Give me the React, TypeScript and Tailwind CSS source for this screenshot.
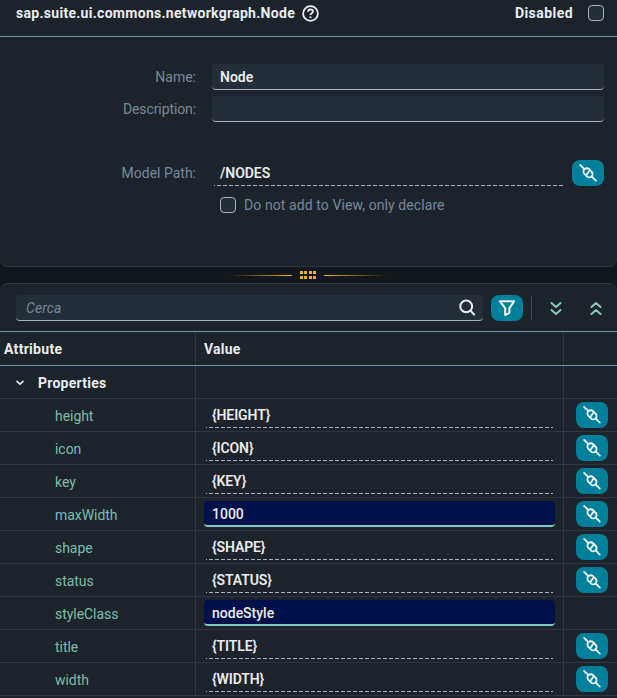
import type { ReactNode } from "react";

function LinkIcon() {
  return (
    <svg width="18" height="18" viewBox="0 0 18 18" fill="none" stroke="#eef6f8" strokeWidth="1.8" strokeLinecap="round">
      <path d="M1.2 1 5.4 5.2M12.6 12.4l4.2 4.2" />
      <rect x="3.9" y="5.5" width="10.2" height="6.6" rx="3.3" transform="rotate(45 9 8.8)" />
      <path d="M10.4 6.8 7.6 10.8" />
    </svg>
  );
}

function LinkButton() {
  return (
    <button className="flex h-[26px] w-8 shrink-0 items-center justify-center rounded-lg bg-[#00809b]">
      <LinkIcon />
    </button>
  );
}

function Box() {
  return <span className="block size-4 shrink-0 rounded-[4px] border border-[#a9b4be] bg-[#242e38]" />;
}

function Dashes() {
  return (
    <span className="block h-px bg-[repeating-linear-gradient(90deg,#a9b4be_0_1px,transparent_1px_3px,#a9b4be_3px_6px)]" />
  );
}

function Label({ children }: { children: ReactNode }) {
  return <span className="w-[196px] shrink-0 text-right text-[#748a9f]">{children}</span>;
}

const rows = [
  { name: "height", value: "{HEIGHT}", bound: true, link: true },
  { name: "icon", value: "{ICON}", bound: true, link: true },
  { name: "key", value: "{KEY}", bound: true, link: true },
  { name: "maxWidth", value: "1000", bound: false, link: true },
  { name: "shape", value: "{SHAPE}", bound: true, link: true },
  { name: "status", value: "{STATUS}", bound: true, link: true },
  { name: "styleClass", value: "nodeStyle", bound: false, link: false },
  { name: "title", value: "{TITLE}", bound: true, link: true },
  { name: "width", value: "{WIDTH}", bound: true, link: true },
];

export default function App() {
  return (
    <div className="flex h-[698px] w-[617px] flex-col overflow-hidden bg-[#12171b] font-['Roboto',sans-serif] text-[14px] leading-[18px] text-[#eaecee]">
      <section className="flex h-[267px] shrink-0 flex-col rounded-b-lg border-b border-[#2f3742] bg-[#1d232a]">
        <header className="flex h-[37px] items-center border-b border-[#7590a9] pr-[13px] pb-[10px] pl-4 font-bold">
          <span className="tracking-[0.29px]">sap.suite.ui.commons.networkgraph.Node</span>
          <svg className="ml-[7px]" width="17" height="17" viewBox="0 0 17 17" fill="none" stroke="#eaecee" strokeWidth="1.8">
            <circle cx="8.5" cy="8.5" r="7.4" />
            <path d="M6 6.8C6 5.4 7 4.5 8.5 4.5S11 5.4 11 6.6c0 1.6-2.5 1.7-2.5 3.3" />
            <path d="M8.5 11.4v1.7" />
          </svg>
          <span className="mr-[15px] ml-auto tracking-[0.45px]">Disabled</span>
          <Box />
        </header>
        <div className="flex flex-col pt-[27px] pr-[13px]">
          <div className="flex h-[26px] items-center">
            <Label>Name:</Label>
            <div className="ml-4 flex h-[26px] flex-1 items-center rounded-[4px] border-b border-[#a9b4be] bg-[#242e38] pt-px pl-2 font-semibold">Node</div>
          </div>
          <div className="mt-[6px] flex h-[26px] items-center">
            <Label><span className="tracking-[-0.1px]">Description:</span></Label>
            <div className="ml-4 h-[26px] flex-1 rounded-[4px] border-b border-[#a9b4be] bg-[#242e38]" />
          </div>
          <div className="mt-[38px] flex h-[26px] items-center">
            <Label>Model Path:</Label>
            <div className="mr-2 ml-[18px] flex h-[26px] flex-1 flex-col justify-between">
              <span className="pt-1 pl-[6px] font-semibold tracking-[-0.05px]">/NODES</span>
              <Dashes />
            </div>
            <LinkButton />
          </div>
          <div className="mt-[10px] flex h-[18px] items-center gap-2 pl-[220px] text-[#748a9f]">
            <Box />
            <span className="tracking-[0.09px]">Do not add to View, only declare</span>
          </div>
        </div>
      </section>

      <div className="flex h-4 shrink-0 items-center justify-center pr-px">
        <span className="h-px w-16 bg-linear-to-r from-transparent to-[#f5b223]" />
        <span className="mx-2 grid grid-cols-4 gap-x-[1.33px] gap-y-[2px]">
          {Array.from({ length: 8 }, (_, i) => (
            <i key={i} className="block size-[3px] bg-[#f5b223]" />
          ))}
        </span>
        <span className="h-px w-16 bg-linear-to-l from-transparent to-[#f5b223]" />
      </div>

      <section className="flex h-[415px] shrink-0 flex-col overflow-hidden rounded-t-lg border-t border-[#2f3742] bg-[#1d232a]">
        <div className="flex h-12 shrink-0 border-b border-[#7590a9] pt-[11px] pl-4">
          <div className="flex h-[26px] w-[467px] items-center justify-between rounded-[4px] border-b border-[#a9b4be] bg-[#242e38] pr-[7px] pl-[10px]">
            <span className="pt-px tracking-[0.1px] text-[#748a9f] italic">Cerca</span>
            <svg width="17" height="17" viewBox="0 0 17 17" fill="none" stroke="#eaecee" strokeWidth="2" strokeLinecap="round">
              <circle cx="7.2" cy="7.4" r="5.9" />
              <path d="m11.6 11.8 3.6 3.8" />
            </svg>
          </div>
          <button className="ml-2 flex h-[26px] w-8 items-center justify-center rounded-lg bg-[#00809b]">
            <svg width="18" height="18" viewBox="0 0 18 18" fill="none" stroke="#f1f7f8" strokeWidth="2" strokeLinejoin="round">
              <path d="M1.8 2.2h14.4l-4.8 6.9v4.7L7.2 16V9.1Z" />
            </svg>
          </button>
          <span className="mt-px ml-2 h-6 w-px bg-[#3c4753]" />
          <svg className="mt-[6px] ml-[17px]" width="14" height="16" viewBox="0 0 14 16" fill="none" stroke="#83ccbb" strokeWidth="2" strokeLinecap="round" strokeLinejoin="round">
            <path d="m2.5 2 4.5 4 4.5-4M2.5 9 7 13l4.5-4" />
          </svg>
          <svg className="mt-[6px] ml-[26px]" width="14" height="16" viewBox="0 0 14 16" fill="none" stroke="#83ccbb" strokeWidth="2" strokeLinecap="round" strokeLinejoin="round">
            <path d="m2.5 6 4.5-4 4.5 4M2.5 13 7 9l4.5 4" />
          </svg>
        </div>
        <div className="grid h-[34px] shrink-0 grid-cols-[196px_368px_53px] border-b border-[#7590a9] font-bold">
          <span className="border-r border-[#2f3742] pt-2 pl-1 tracking-[0.3px]">Attribute</span>
          <span className="border-r border-[#2f3742] pt-2 pl-2 tracking-[0.25px]">Value</span>
        </div>
        <div className="grid h-[33px] shrink-0 grid-cols-[196px_368px_53px] border-b border-[#2f3742] font-bold">
          <span className="flex items-center border-r border-[#2f3742] pt-[2px] pl-[15px]">
            <svg width="10" height="8" viewBox="0 0 10 8" fill="none" stroke="#eaecee" strokeWidth="1.6" strokeLinecap="round" strokeLinejoin="round">
              <path d="m2 2.3 3 2.8 3-2.8" />
            </svg>
            <span className="ml-[13px] tracking-[0.25px]">Properties</span>
          </span>
          <span className="border-r border-[#2f3742]" />
        </div>
        {rows.map((r) => (
          <div key={r.name} className="grid h-[33px] shrink-0 grid-cols-[196px_368px_53px] border-b border-[#2f3742]">
            <span className="border-r border-[#2f3742] pt-2 pl-[55px] tracking-[-0.05px] text-[#78bfae]">{r.name}</span>
            <div className="border-r border-[#2f3742] pt-[3px] pr-2 pl-2 font-semibold tracking-[-0.1px]">
              {r.bound ? (
                <div className="flex h-[26px] flex-col justify-between px-[2px]">
                  <span className="pt-1 pl-[6px]">{r.value}</span>
                  <Dashes />
                </div>
              ) : (
                <div className="h-[26px] rounded-[4px] border-b-2 border-[#83ccbb] bg-[#00114a] pt-1 pl-2 font-medium tracking-normal">
                  {r.value}
                </div>
              )}
            </div>
            <div className="pt-[3px] pl-3">{r.link && <LinkButton />}</div>
          </div>
        ))}
      </section>
    </div>
  );
}
